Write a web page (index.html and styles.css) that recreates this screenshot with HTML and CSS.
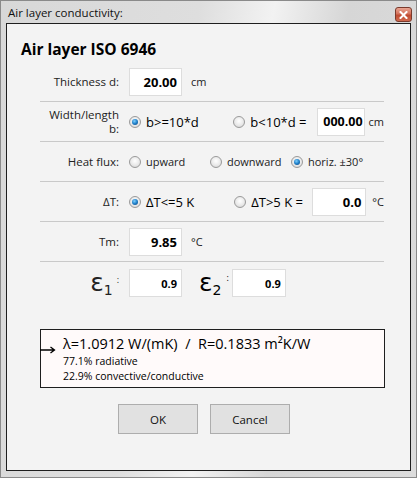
FILE: index.html
```html
<!DOCTYPE html>
<html>
<head>
<meta charset="utf-8">
<link rel="stylesheet" href="styles.css">
</head>
<body>
<div class="window">
  <div class="titlebar">
    <span class="title">Air layer conductivity:</span>
    <span class="close"><svg width="9" height="8" viewBox="0 0 9 8"><path d="M1.5 1 L7.5 7 M7.5 1 L1.5 7" stroke="#fff" stroke-width="2" stroke-linecap="square"/></svg></span>
  </div>
  <div class="client">
    <h1 class="heading">Air layer ISO 6946</h1>
    <div class="form">
      <div class="row">
        <div class="label">Thickness d:</div>
        <div class="field w53"><span>20.00</span></div>
        <span class="unit u9">cm</span>
      </div>
      <div class="row">
        <div class="label two">Width/length<br>b:</div>
        <span class="radio on"></span><span class="opt big o1">b&gt;=10*d</span>
        <span class="radio"></span><span class="opt big o2">b&lt;10*d =</span>
        <div class="field w48 tight"><span>000.00</span></div>
        <span class="unit u4">cm</span>
      </div>
      <div class="row">
        <div class="label">Heat flux:</div>
        <span class="radio"></span><span class="opt small s1">upward</span>
        <span class="radio"></span><span class="opt small s2">downward</span>
        <span class="radio on"></span><span class="opt small">horiz. ±30°</span>
      </div>
      <div class="row">
        <div class="label">ΔT:</div>
        <span class="radio on"></span><span class="opt big o1">ΔT&lt;=5 K</span>
        <span class="radio"></span><span class="opt big o3">ΔT&gt;5 K =</span>
        <div class="field w54"><span>0.0</span></div>
        <span class="unit u6">°C</span>
      </div>
      <div class="row">
        <div class="label">Tm:</div>
        <div class="field w53"><span>9.85</span></div>
        <span class="unit u9">°C</span>
      </div>
      <div class="row eps">
        <div class="label"><span class="eps-sym">ε<sub>1</sub></span><span class="colon">:</span></div>
        <div class="field w53 sm"><span>0.9</span></div>
        <span class="eps-sym e2">ε<sub>2</sub></span><span class="colon c2">:</span>
        <div class="field w54 sm"><span>0.9</span></div>
      </div>
    </div>
    <div class="result">
      <span class="arrow"><svg width="16" height="8" viewBox="0 0 16 8"><path d="M0 4 H14 M10.5 1 L14.5 4 L10.5 7" stroke="#000" stroke-width="1.3" fill="none"/></svg></span>
      <div class="res-main">λ=1.0912 W/(mK)&nbsp; /&nbsp; R=0.1833 m²K/W</div>
      <div class="res-sub">77.1% radiative</div>
      <div class="res-sub">22.9% convective/conductive</div>
    </div>
    <div class="buttons">
      <button class="btn">OK</button>
      <button class="btn">Cancel</button>
    </div>
  </div>
</div>
</body>
</html>
```
FILE: styles.css
```css
* { box-sizing: border-box; }
html, body { margin: 0; padding: 0; }
body {
  width: 417px;
  height: 478px;
  overflow: hidden;
  font-family: "Open Sans", "Noto Sans", sans-serif;
  color: #000;
}
.window {
  width: 417px;
  height: 478px;
  border: 1px solid #8a8a8a;
  background: linear-gradient(100deg, #d8d8d8 0%, #dedede 40%, #f2f2f2 55%, #d6d6d6 70%, #dcdcdc 100%);
  padding: 0 5px 6px 5px;
  display: flex;
  flex-direction: column;
}
.titlebar {
  height: 22px;
  display: flex;
  align-items: center;
  justify-content: space-between;
  padding-left: 2px;
  padding-top: 1px;
}
.title {
  font-size: 11.5px;
  color: #111;
}
.close {
  width: 17px;
  height: 15px;
  margin-top: 4px;
  margin-right: -1px;
  border: 1px solid #7a3a2c;
  border-radius: 3px;
  background: linear-gradient(#e9a592 0%, #d3705a 45%, #bf4a30 55%, #d06a4f 100%);
  display: flex;
  align-items: center;
  justify-content: center;
}
.client {
  flex: 1;
  border: 1px solid #1e1e1e;
  background: #f3f3f3;
  display: flex;
  flex-direction: column;
}
.heading {
  margin: 14px 0 0 14px;
  font-size: 15.5px;
  line-height: 22px;
  font-weight: bold;
}
.form {
  margin: 2px 0 0 33px;
  width: 344px;
}
.row {
  height: 40px;
  border-bottom: 1px solid #c9c9c9;
  display: flex;
  align-items: center;
  font-size: 11.5px;
}
.row.eps {
  border-bottom: none;
  height: 44px;
  padding-bottom: 2px;
}
.label {
  width: 79px;
  margin-right: 10px;
  text-align: right;
  color: #222;
  flex: none;
}
.label.two { line-height: 14px; }
.field {
  height: 28px;
  background: #fff;
  border: 1px solid #dddddd;
  display: flex;
  align-items: center;
  justify-content: flex-end;
  overflow: hidden;
  padding-right: 4px;
  font-weight: bold;
  font-size: 13px;
  white-space: nowrap;
  flex: none;
}
.field.tight { padding-right: 1px; font-size: 12.5px; }
.field.sm { font-size: 11px; padding-right: 4px; }
.w53 { width: 53px; }
.w48 { width: 48px; }
.w54 { width: 54px; }
.unit { font-size: 11px; color: #222; }
.u9 { margin-left: 9px; }
.u4 { margin-left: 4px; }
.u6 { margin-left: 6px; }
.radio {
  width: 12px;
  height: 12px;
  border-radius: 50%;
  border: 1px solid #9a9a9a;
  background: radial-gradient(circle at 50% 40%, #ffffff 0%, #e9e9e9 55%, #cfcfcf 100%);
  flex: none;
  position: relative;
  margin-right: 5px;
}
.radio.on::after {
  content: "";
  position: absolute;
  left: 2px;
  top: 2px;
  width: 6px;
  height: 6px;
  border-radius: 50%;
  background: radial-gradient(circle at 40% 35%, #7fd0ff 0%, #1f7fc8 50%, #0b3f78 100%);
}
.opt { white-space: nowrap; }
.opt.big { font-size: 13px; }
.opt.small { font-size: 11px; color: #222; }
.o1 { width: 91px; }
.o2 { width: 69px; }
.o3 { width: 63px; }
.s1 { width: 64px; }
.s2 { width: 64px; }
.eps-sym {
  font-size: 25px;
  line-height: 24px;
  font-family: "DejaVu Sans", sans-serif;
}
.eps-sym sub {
  font-size: 14px;
  vertical-align: -4px;
  line-height: 0;
}
.colon {
  font-size: 9px;
  margin-left: 4px;
  vertical-align: 8px;
}
.eps .label { margin-right: 10px; }
.e2 { margin-left: 17px; }
.c2 { margin-left: 5px; margin-right: 3px; align-self: center; position: relative; top: -6px; }
.result {
  margin: 23px 0 0 33px;
  width: 345px;
  height: 59px;
  background: #fffafa;
  border: 1px solid #1e1e1e;
  position: relative;
  padding: 4px 0 0 22px;
}
.arrow {
  position: absolute;
  left: -1px;
  top: 16px;
  line-height: 0;
}
.res-main {
  font-size: 14.5px;
  line-height: 20px;
}
.res-sub {
  font-size: 10.5px;
  line-height: 15px;
}
.buttons {
  margin: 16px 0 0 111px;
  display: flex;
  gap: 12px;
}
.btn {
  width: 80px;
  height: 30px;
  background: #e1e1e1;
  border: 1px solid #adadad;
  font-family: "Open Sans", "Noto Sans", sans-serif;
  font-size: 11.5px;
  color: #111;
  padding: 0;
}
```
